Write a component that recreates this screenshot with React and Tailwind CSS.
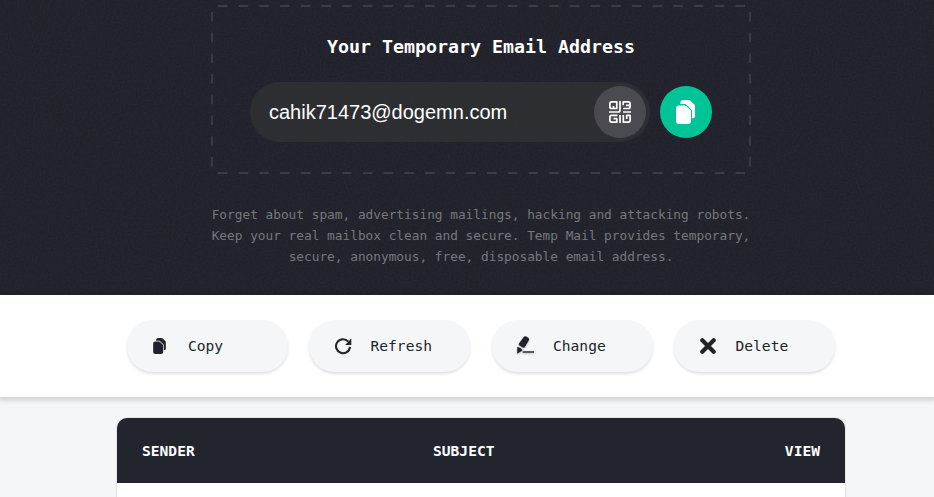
const mono = "font-['Consolas','DejaVu_Sans_Mono',monospace]";

function Noise() {
  return (
    <svg className="pointer-events-none absolute inset-0 h-full w-full opacity-[0.06]" aria-hidden="true">
      <filter id="grain">
        <feTurbulence type="fractalNoise" baseFrequency="0.5" numOctaves="2" seed="4" />
        <feColorMatrix type="saturate" values="0" />
      </filter>
      <rect width="100%" height="100%" filter="url(#grain)" />
    </svg>
  );
}

function DashedFrame() {
  return (
    <svg className="pointer-events-none absolute inset-0" width="540" height="169" stroke="#3b3c45" strokeWidth="1.8" strokeLinecap="butt">
      <path d="M7 1H534M7 168H534" strokeDasharray="9.5 11.2" />
      <path d="M1 7V163M539 7V163" strokeDasharray="9.5 11.2" />
    </svg>
  );
}

function CopyIcon({ width, height, gap }) {
  return (
    <svg width={width} height={height} viewBox="0 0 19 24" fill="currentColor">
      <path d="M7.4 0H12.6Q13.6 0 14.4.8L18.2 4.6Q19 5.4 19 6.4V15.8Q19 18.3 16.5 18.3H10V4H4.4V3Q4.4 0 7.4 0Z" />
      <path d="M3 5.4H8.7Q9.700 5.400 10.500 6.200L14.200 9.800Q15 10.600 15 11.600V21Q15 24 12 24H3Q0 24 0 21V8.400Q0 5.400 3 5.400Z" stroke={gap} strokeWidth="2" paintOrder="stroke" />
    </svg>
  );
}

function QrIcon() {
  return (
    <svg width="22" height="22" viewBox="0 0 22 22" fill="none" stroke="#fff" strokeWidth="1.7" strokeLinejoin="round">
      <path d="M4.500 7.500H2.700Q.9 7.500.9 5.700V2.700Q.9.9 2.700.9H7.800V7.500H4.500V5" />
      <path d="M11 0V9.300Q11 11 9.300 11H0" />
      <path d="M14.200 4.300V.9H19.300Q21.100.9 21.100 2.700V5.700Q21.100 7.500 19.300 7.500H14M14 11H22M17 4.300H21" />
      <path d="M8.500 14.300H2.700Q.9 14.300.9 16.100V19.300Q.9 21.100 2.700 21.100H7.800V17.600H4.500" />
      <path d="M11 14V22M14.300 14V21.100H19.300Q21.100 21.100 21.100 19.300V14.300H17.700V18" />
    </svg>
  );
}

function RefreshIcon() {
  return (
    <svg width="17" height="17" viewBox="0 0 17 17" fill="none">
      <path d="M13.300 3.600A7 7 0 1 0 15 8.800" stroke="#212529" strokeWidth="2.100" />
      <path d="M16.300 .6V7H10.200Z" fill="#212529" />
    </svg>
  );
}

function PencilIcon() {
  return (
    <svg width="20" height="20" viewBox="0 0 20 20" className="overflow-visible drop-shadow-[0_1px_1px_rgba(0,0,0,0.2)]">
      <path d="M7.300 1.400Q8.500-.3 10.300.6L12.300 1.800Q13.700 2.800 12.800 4.500L9.100 10.800Q8.200 12.200 6.700 11.500L3.500 9.600Q2.200 8.700 3.100 7.300Z" fill="#20232b" />
      <path d="M1.200 11Q4.500 11 6.800 14.200L1.200 17.800Z" fill="#20232b" />
      <rect x="6.700" y="15" width="11.300" height="2" fill="#555960" />
    </svg>
  );
}

function CloseIcon() {
  return (
    <svg width="16" height="16" viewBox="0 0 16 16">
      <path d="M2.300 2.300L13.700 13.700M13.700 2.300L2.300 13.700" stroke="#212529" strokeWidth="4.200" strokeLinecap="round" />
    </svg>
  );
}

const actions = [
  { label: "Copy", icon: <CopyIcon width={13} height={16} gap="#f5f6f8" />, iconBox: "pl-[1px]" },
  { label: "Refresh", icon: <RefreshIcon />, iconBox: "" },
  { label: "Change", icon: <PencilIcon />, iconBox: "-ml-px mr-px" },
  { label: "Delete", icon: <CloseIcon />, iconBox: "" },
];

export default function App() {
  return (
    <div className={`flex h-[497px] w-[934px] flex-col overflow-hidden bg-[#f5f6f8] ${mono}`}>
      <header className="relative flex h-[295px] shrink-0 flex-col items-center bg-[#1e1f28] pt-[5px] pl-[28px]">
        <Noise />
        <section className="relative flex h-[169px] w-[540px] flex-col items-center pt-[29px]">
          <DashedFrame />
          <h1 className="text-[18.27px] leading-[26px] font-bold whitespace-nowrap text-white">Your Temporary Email Address</h1>
          <div className="mt-[22px] flex items-center gap-[10px]">
            <div className="flex h-[60px] w-[400px] items-center justify-between rounded-full bg-[#323335]/70 pr-1 pl-[19px]">
              <span className="font-['Liberation_Sans',Arial,sans-serif] text-[20px] text-white">cahik71473@dogemn.com</span>
              <button className="flex size-[52px] items-center justify-center rounded-full bg-[#4a4a50]" aria-label="QR code">
                <QrIcon />
              </button>
            </div>
            <button className="flex size-[52px] items-center justify-center rounded-full bg-[#00c497] pr-px text-white" aria-label="Copy address">
              <CopyIcon width={19} height={24} gap="#00c497" />
            </button>
          </div>
        </section>
        <p className="relative mt-[30px] text-center text-[12.79px] leading-[21px] whitespace-nowrap text-[#77787e]">
          Forget about spam, advertising mailings, hacking and attacking robots.
          <br />
          Keep your real mailbox clean and secure. Temp Mail provides temporary,
          <br />
          secure, anonymous, free, disposable email address.
        </p>
      </header>
      <nav className="relative flex h-[102px] shrink-0 gap-[21.5px] bg-white pt-[25px] pl-[126.5px] shadow-[0_1px_5px_2px_rgba(0,0,0,0.16)]">
        {actions.map(({ label, icon, iconBox }) => (
          <button key={label} className="flex h-[52px] w-[161px] items-center rounded-full bg-[#f5f6f8] pl-[25.5px] shadow-[0_2px_3px_rgba(0,0,0,0.12)]">
            <span className={`flex w-[36px] shrink-0 items-center text-[#20232b] ${iconBox}`}>{icon}</span>
            <span className="text-[14.6px] text-[#212529]">{label}</span>
          </button>
        ))}
      </nav>
      <main className="mt-5 ml-[116px] flex w-[730px] flex-1 flex-col overflow-hidden rounded-t-[11px] border border-b-0 border-[#e2e4ea] bg-white">
        <div className="grid h-[65px] grid-cols-[291px_1fr_auto] items-center bg-[#22252d] px-[25px] text-[14.6px] font-bold text-white">
          <span>SENDER</span>
          <span>SUBJECT</span>
          <span>VIEW</span>
        </div>
      </main>
    </div>
  );
}
